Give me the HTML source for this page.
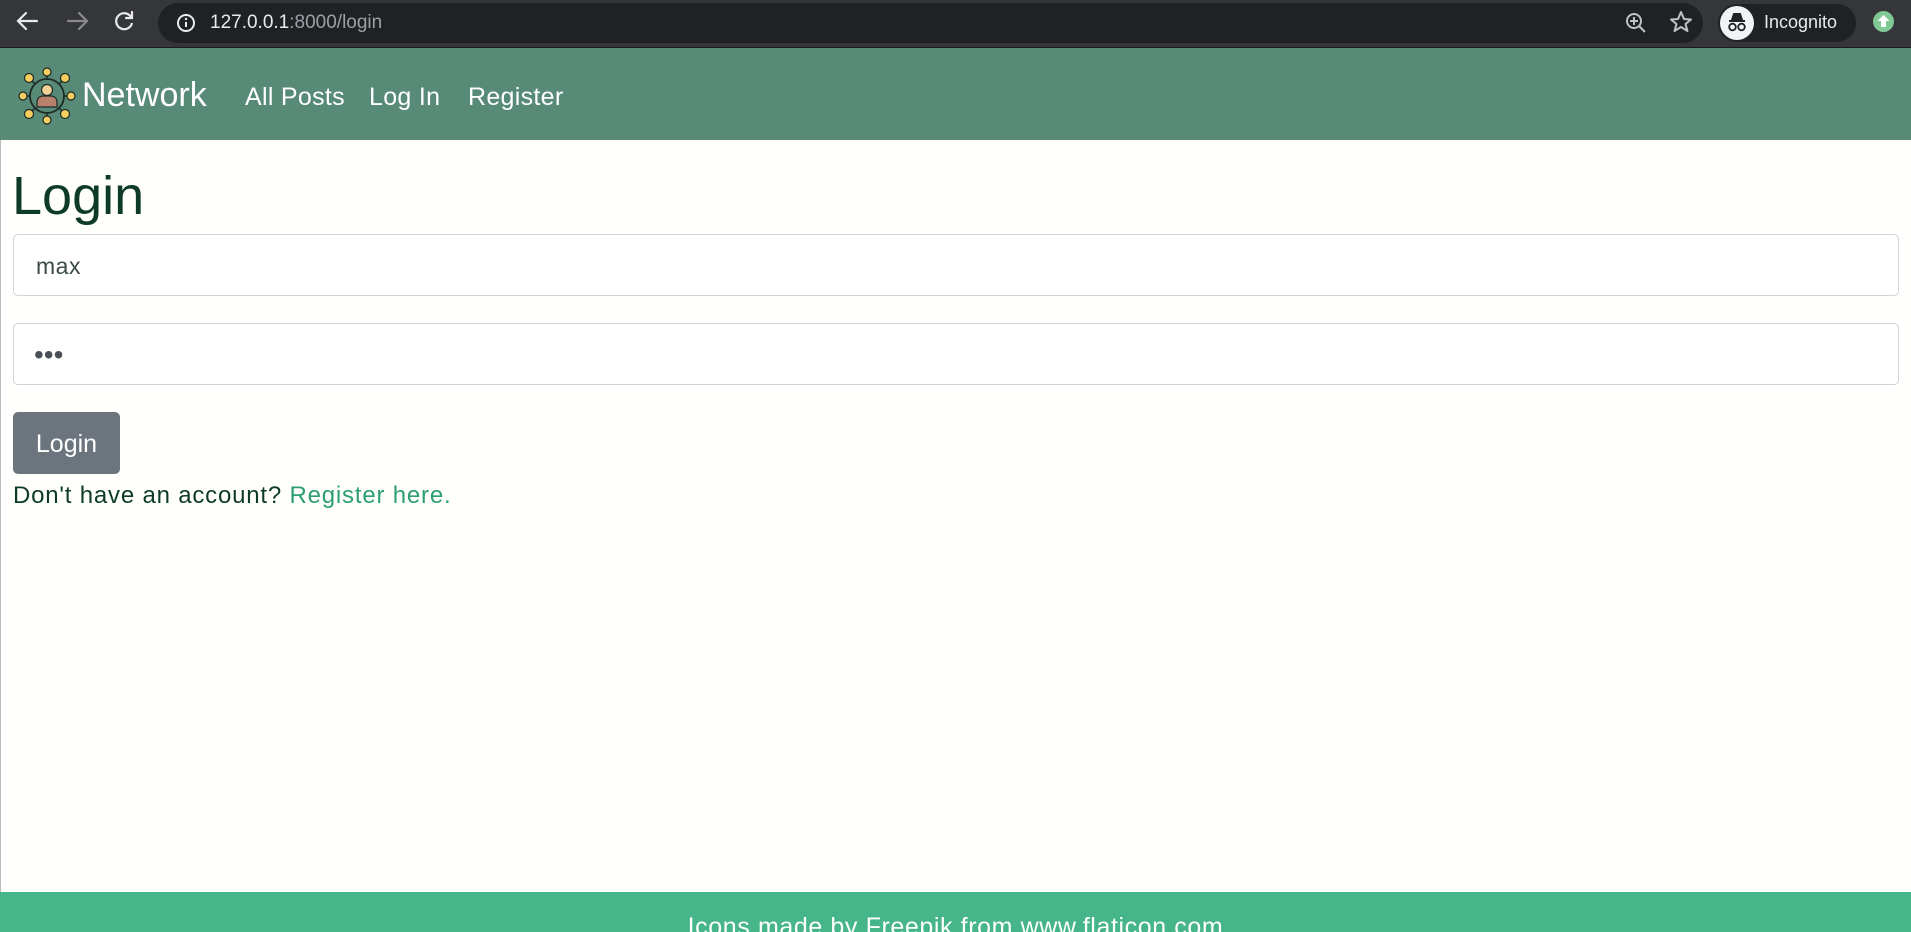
<!DOCTYPE html>
<html><head><meta charset="utf-8"><style>
*{box-sizing:border-box;margin:0;padding:0}
body{width:1911px;height:932px;overflow:hidden;background:#fffffd;font-family:"Liberation Sans",sans-serif;position:relative}
.chrome{position:absolute;left:0;top:0;width:1911px;height:48px;background:#35363a;border-bottom:1px solid #1b1b1d}
.url{position:absolute;left:158px;top:3px;width:1545px;height:40px;border-radius:20px;background:#202124}
.nav{position:absolute;left:0;top:48px;width:1911px;height:92px;background:#578a77}
.nav span{position:absolute;color:#fff;white-space:nowrap}
.inp{position:absolute;left:13px;width:1886px;height:62px;border:1px solid #ced4da;border-radius:5px;background:#fff}
.leftline{position:absolute;left:0;top:140px;width:1px;height:752px;background:#bbb}
</style></head><body>
<div class="chrome">
<svg width="160" height="48" style="position:absolute;left:0;top:0">
<g stroke="#e8eaed" stroke-width="2.2" fill="none" stroke-linecap="round"><path d="M37 21H19M26 13l-8 8 8 8"/></g>
<g stroke="#8a8b8e" stroke-width="2.2" fill="none" stroke-linecap="round"><path d="M68 21h18M79 13l8 8-8 8"/></g>
<g stroke="#e8eaed" stroke-width="2.2" fill="none"><path d="M131 17a8 8 0 1 0 1 6"/><path d="M132 12v6h-6" stroke-linecap="round"/></g>
</svg>
<div class="url">
<svg width="24" height="24" style="position:absolute;left:16px;top:8px"><circle cx="12" cy="12" r="8" stroke="#e8eaed" stroke-width="2" fill="none"/><path d="M12 11v5" stroke="#e8eaed" stroke-width="2"/><circle cx="12" cy="8" r="1.2" fill="#e8eaed"/></svg>
<div style="position:absolute;left:52px;top:9px;font-size:19px;color:#e8eaed">127.0.0.1<span style="color:#9aa0a6">:8000/login</span></div>
<svg width="90" height="40" style="position:absolute;left:1450px;top:0"><circle cx="26" cy="18" r="7" stroke="#bdc1c6" stroke-width="2" fill="none"/><path d="M31 23l6 6M26 14v8M22 18h8" stroke="#bdc1c6" stroke-width="2"/><path d="M73 9l3 7 7 0.5-5.5 4.5 2 7-6.5-4-6.5 4 2-7-5.5-4.5 7-0.5z" stroke="#bdc1c6" stroke-width="2" fill="none" stroke-linejoin="round"/></svg>
</div>
<div style="position:absolute;left:1718px;top:4px;width:138px;height:38px;border-radius:19px;background:#202124">
<div style="position:absolute;left:2px;top:2px;width:34px;height:34px;border-radius:50%;background:#f1f3f4"></div>
<svg width="34" height="34" style="position:absolute;left:2px;top:2px"><path d="M9 15h16M12 14l2-6h6l2 6z" stroke="#202124" stroke-width="2" fill="#202124"/><circle cx="12.5" cy="21" r="3.3" stroke="#202124" stroke-width="1.8" fill="none"/><circle cx="21.5" cy="21" r="3.3" stroke="#202124" stroke-width="1.8" fill="none"/></svg>
<div style="position:absolute;left:46px;top:8px;font-size:18px;color:#e8eaed">Incognito</div>
</div>
<div style="position:absolute;left:1873px;top:11px;width:21px;height:21px;border-radius:50%;background:#81c995"></div>
<svg width="21" height="21" style="position:absolute;left:1873px;top:11px"><path d="M10.5 4l6 6h-3.5v6h-5v-6H4.5z" fill="#fff"/></svg>
</div>
<div class="nav">
<svg width="60" height="60" style="position:absolute;left:17px;top:18px">
<g stroke="#1e2a25" stroke-width="1.5"><path d="M30 30L30 8M30 30L30 52M30 30L8 30M30 30L52 30M30 30L14 14M30 30L46 14M30 30L14 46M30 30L46 46"/></g>
<circle cx="30" cy="30" r="17" fill="#578a77" stroke="#1e2a25" stroke-width="1.8"/>
<circle cx="30" cy="24" r="5.5" fill="#f2d196" stroke="#1e2a25" stroke-width="1.2"/>
<path d="M20 41v-5a6 6 0 0 1 6-6h8a6 6 0 0 1 6 6v5z" fill="#b7816b" stroke="#1e2a25" stroke-width="1.2"/>
<g fill="#f6cf5f" stroke="#1e2a25" stroke-width="1.2"><circle cx="30" cy="6" r="4"/><circle cx="30" cy="54" r="4"/><circle cx="6" cy="30" r="4"/><circle cx="54" cy="30" r="4"/><circle cx="12" cy="12" r="4.5"/><circle cx="48" cy="12" r="4.5"/><circle cx="12" cy="48" r="4.5"/><circle cx="48" cy="48" r="4.5"/></g>
</svg>
<span style="left:82px;top:28px;font-size:34px">Network</span>
<span style="left:245px;top:35px;font-size:25px;letter-spacing:0.3px">All Posts</span>
<span style="left:369px;top:35px;font-size:25px;letter-spacing:0.3px">Log In</span>
<span style="left:468px;top:35px;font-size:25px;letter-spacing:0.3px">Register</span>
</div>
<div class="leftline"></div>
<div style="position:absolute;left:12px;top:165px;font-size:54px;color:#0d3b26">Login</div>
<div class="inp" style="top:234px"><span style="position:absolute;left:22px;top:18px;font-size:23px;color:#3a4a44;letter-spacing:0.5px">max</span></div>
<div class="inp" style="top:323px"><span style="position:absolute;left:20px;top:15px;font-size:28px;color:#495057;letter-spacing:0px">•••</span></div>
<div style="position:absolute;left:13px;top:412px;width:107px;height:62px;border-radius:5px;background:#6c757d;color:#fff;font-size:25px;text-align:center;line-height:64px">Login</div>
<div style="position:absolute;left:13px;top:482px;font-size:24px;letter-spacing:0.8px;color:#0d3b26;white-space:nowrap">Don't have an account? <span style="color:#2e9e74">Register here.</span></div>
<div style="position:absolute;left:0;top:892px;width:1911px;height:40px;background:#46b68a;overflow:hidden">
<div style="position:absolute;left:0;width:1911px;top:21px;text-align:center;color:#fff;font-size:25px;letter-spacing:0.6px">Icons made by Freepik from www.flaticon.com</div>
</div>
</body></html>
